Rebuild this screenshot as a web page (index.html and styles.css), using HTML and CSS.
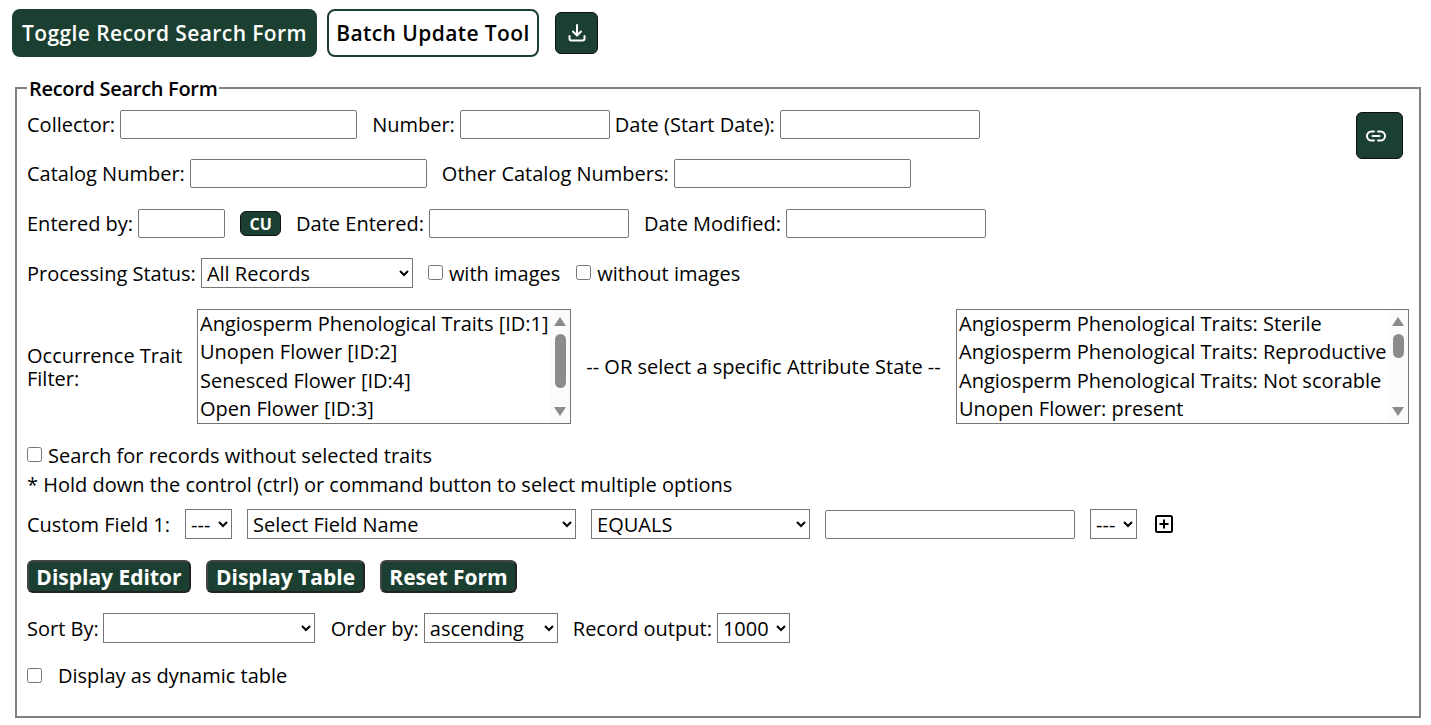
FILE: index.html
```html
<!DOCTYPE html>
<html lang="en">

<head>
    <meta charset="UTF-8">
    <title>Record Search Form</title>
    <link rel="stylesheet" href="styles.css">
</head>

<body>
    <div class="toolbar">
        <button class="btn-big">Toggle Record Search Form</button>
        <button class="btn-big btn-outline">Batch Update Tool</button>
        <button class="btn-icon btn-download" aria-label="Download">
            <svg width="24" height="24" viewBox="0 0 24 24" fill="none" stroke="currentColor" stroke-width="2" stroke-linecap="round" stroke-linejoin="round">
                <path d="M12 4v10M8 10.5l4 4 4-4M4.5 15v2.5a2 2 0 0 0 2 2h11a2 2 0 0 0 2-2V15"/>
            </svg>
        </button>
    </div>

    <fieldset class="search-form">
        <legend>Record Search Form</legend>

        <div class="form-top">
            <div class="top-rows">
                <div class="row row-first">
                    <label for="collector">Collector:</label>
                    <input type="text" id="collector" class="w-237">
                    <label for="number" class="ml-15">Number:</label>
                    <input type="text" id="number" class="w-150">
                    <label for="startDate" class="ml-5">Date (Start Date):</label>
                    <input type="text" id="startDate" class="w-200">
                </div>
                <div class="row row-second">
                    <label for="catalog">Catalog Number:</label>
                    <input type="text" id="catalog" class="w-237">
                    <label for="otherCatalog" class="ml-15">Other Catalog Numbers:</label>
                    <input type="text" id="otherCatalog" class="w-237">
                </div>
            </div>
            <button class="btn-icon btn-link" aria-label="Copy link">
                <svg width="24" height="24" viewBox="0 0 24 24" fill="none" stroke="currentColor" stroke-width="2" stroke-linecap="round">
                    <path d="M10 7.5H7.5a4.5 4.5 0 0 0 0 9H10M14 7.5h2.5a4.5 4.5 0 0 1 0 9H14M8.5 12h7"/>
                </svg>
            </button>
        </div>

        <div class="row row-third">
            <label for="enteredBy">Entered by:</label>
            <input type="text" id="enteredBy" class="w-87">
            <button class="btn-cu ml-15">CU</button>
            <label for="dateEntered">Date Entered:</label>
            <input type="text" id="dateEntered" class="w-200">
            <label for="dateModified" class="ml-15">Date Modified:</label>
            <input type="text" id="dateModified" class="w-200">
        </div>

        <div class="row row-fourth">
            <label for="status">Processing Status:</label>
            <select id="status" class="sel-status">
                <option>All Records</option>
            </select>
            <label class="check ml-15"><input type="checkbox">with images</label>
            <label class="check ml-15"><input type="checkbox">without images</label>
        </div>

        <div class="trait-row">
            <div class="trait-label">Occurrence Trait Filter:</div>
            <div class="listbox list-traits">
                <div class="list-items">
                    <div>Angiosperm Phenological Traits [ID:1]</div>
                    <div>Unopen Flower [ID:2]</div>
                    <div>Senesced Flower [ID:4]</div>
                    <div>Open Flower [ID:3]</div>
                </div>
                <div class="scrollbar">
                    <span class="arrow-up"></span>
                    <span class="thumb thumb-long"></span>
                    <span class="arrow-down"></span>
                </div>
            </div>
            <div class="trait-or">-- OR select a specific Attribute State --</div>
            <div class="listbox list-states">
                <div class="list-items">
                    <div>Angiosperm Phenological Traits: Sterile</div>
                    <div>Angiosperm Phenological Traits: Reproductive</div>
                    <div>Angiosperm Phenological Traits: Not scorable</div>
                    <div>Unopen Flower: present</div>
                </div>
                <div class="scrollbar">
                    <span class="arrow-up"></span>
                    <span class="thumb thumb-short"></span>
                    <span class="arrow-down"></span>
                </div>
            </div>
        </div>

        <div class="row row-without">
            <label class="check"><input type="checkbox">Search for records without selected traits</label>
        </div>
        <div class="note">* Hold down the control (ctrl) or command button to select multiple options</div>

        <div class="row row-custom">
            <label for="paren1">Custom Field 1:</label>
            <select id="paren1" class="sel-small ml-10"><option>---</option></select>
            <select class="sel-field ml-15"><option>Select Field Name</option></select>
            <select class="sel-equals ml-15"><option>EQUALS</option></select>
            <input type="text" class="w-250 ml-15">
            <select class="sel-close ml-15"><option>---</option></select>
            <svg class="add-icon" width="20" height="20" viewBox="0 0 20 20" fill="none" stroke="#000" stroke-width="2">
                <rect x="2" y="2" width="16" height="16" rx="1.5"/>
                <path d="M10 5.5v9M5.5 10h9"/>
            </svg>
        </div>

        <div class="actions">
            <button class="btn-action btn-editor">Display Editor</button>
            <button class="btn-action btn-table">Display Table</button>
            <button class="btn-action btn-reset">Reset Form</button>
        </div>

        <div class="row row-sort">
            <label for="sortBy">Sort By:</label>
            <select id="sortBy" class="sel-sort"><option></option></select>
            <label for="orderBy" class="ml-15">Order by:</label>
            <select id="orderBy" class="sel-order"><option>ascending</option></select>
            <label for="output" class="ml-15">Record output:</label>
            <select id="output" class="sel-output"><option>1000</option></select>
        </div>

        <div class="row row-dynamic">
            <label class="check check-wide"><input type="checkbox">Display as dynamic table</label>
        </div>
    </fieldset>
</body>

</html>
```

FILE: styles.css
```css
body {
    margin: 0;
    padding: 9px 10px 0 15px;
    background-color: white;
    color: #000;
    font-family: "Open Sans", Arial, sans-serif;
    font-size: 20px;
    overflow: hidden;
}

button {
    font-family: inherit;
    cursor: pointer;
}

.toolbar {
    display: flex;
    align-items: center;
    margin-left: -3px;
    height: 48px;
}

.btn-big {
    width: 305px;
    height: 48px;
    padding: 0;
    margin-right: 10px;
    border: 2px solid #1b3f30;
    border-radius: 8px;
    background-color: #1b3f30;
    color: white;
    font-size: 21px;
    font-weight: 600;
    letter-spacing: 0.4px;
    white-space: nowrap;
}

.btn-outline {
    width: 212px;
    margin-right: 16px;
    background-color: white;
    color: #000;
}

.btn-icon {
    display: flex;
    align-items: center;
    justify-content: center;
    padding: 0;
    border: 1px solid #111;
    border-radius: 6px;
    background-color: #1b3f30;
    color: white;
}

.btn-download {
    width: 43px;
    height: 42px;
}

.btn-link {
    width: 47px;
    height: 47px;
    padding-right: 7px;
    margin-top: 2px;
    margin-right: 6px;
    flex-shrink: 0;
}

.search-form {
    margin: 18px 0 0;
    padding: 0 10px;
    height: 643px;
    min-width: 0;
    box-sizing: border-box;
    border: 2px solid #808080;
}

.search-form legend {
    padding: 2px 2px 0;
    font-size: 20px;
    font-weight: 600;
    letter-spacing: -0.3px;
    line-height: 23px;
}

.form-top {
    display: flex;
    justify-content: space-between;
    align-items: flex-start;
    padding-top: 10px;
}

.row {
    display: flex;
    align-items: center;
}

label,
.row input,
.row select {
    flex-shrink: 0;
}

.row > label {
    margin-right: 5px;
}

.row > .check {
    margin-right: 1px;
}

.row input[type="text"],
.row select {
    height: 29px;
    box-sizing: border-box;
    border: 1px solid #767676;
    border-radius: 2px;
    background-color: white;
    font-family: inherit;
    font-size: 20px;
    color: #000;
    padding: 0 1px;
}

.row select {
    height: 30px;
    border-radius: 0;
    padding-left: 1px;
}

.w-87 { width: 87px; }
.w-150 { width: 150px; }
.w-200 { width: 200px; }
.w-237 { width: 237px; }
.w-250 { width: 250px; }

.row > .ml-15 { margin-left: 15px; }
.row > .ml-10 { margin-left: 10px; }
.row > .ml-5 { margin-left: 5px; }

.row-second {
    margin-top: 20px;
}

.row-third {
    margin-top: 21px;
}

.row-fourth {
    margin-top: 20px;
}

.check {
    display: flex;
    align-items: center;
}

.check input {
    width: 15px;
    height: 15px;
    margin: 0 6px 2px 0;
}

.btn-cu {
    width: 41px;
    height: 25px;
    padding: 0;
    margin-right: 15px;
    border: 1px solid #111;
    border-radius: 6px;
    background-color: #1b3f30;
    color: white;
    font-size: 16px;
    font-weight: 700;
}

.sel-status { width: 212px; }
.sel-small { width: 47px; }
.sel-field { width: 329px; }
.sel-equals { width: 219px; }
.sel-close { width: 47px; }
.sel-sort { width: 212px; }
.sel-order { width: 134px; }
.sel-output { width: 73px; }

.trait-row {
    display: flex;
    align-items: center;
    margin-top: 21px;
}

.trait-label {
    width: 170px;
    line-height: 23px;
    margin-top: 1px;
}

.listbox {
    display: flex;
    height: 115px;
    box-sizing: border-box;
    border: 1px solid #767676;
}

.list-traits {
    width: 374px;
}

.list-states {
    width: 453px;
}

.list-items {
    flex: 1;
    padding-left: 2px;
    line-height: 28.3px;
    white-space: nowrap;
    overflow: hidden;
}

.scrollbar {
    display: flex;
    flex-direction: column;
    align-items: center;
    width: 20px;
    padding: 7px 0;
    box-sizing: border-box;
    background-color: #fbfbfb;
}

.arrow-up,
.arrow-down {
    width: 0;
    height: 0;
    border-left: 6px solid transparent;
    border-right: 6px solid transparent;
}

.arrow-up {
    border-bottom: 9px solid #8b8b8b;
}

.arrow-down {
    margin-top: auto;
    border-top: 9px solid #8b8b8b;
}

.thumb {
    width: 11px;
    margin-top: 8px;
    border-radius: 6px;
    background-color: #8b8b8b;
}

.thumb-long { height: 54px; }
.thumb-short { height: 24px; }

.trait-or {
    width: 385px;
    text-align: center;
}

.row-without {
    margin-top: 18px;
}

.note {
    margin-top: 3px;
    line-height: 26px;
}

.row-custom {
    margin-top: 11px;
}

.add-icon {
    margin-left: 17px;
}

.actions {
    display: flex;
    gap: 15px;
    margin-top: 21px;
}

.btn-action {
    height: 33px;
    padding: 0;
    border: 2px solid #222;
    border-top-color: #444;
    border-left-color: #444;
    border-radius: 6px;
    background-color: #1b3f30;
    color: white;
    font-size: 21px;
    font-weight: 700;
    white-space: nowrap;
}

.btn-editor { width: 164px; }
.btn-table { width: 159px; }
.btn-reset { width: 137px; }

.row-sort {
    margin-top: 20px;
}

.row-sort label:first-child {
    margin-right: 4px;
}

.row-sort select:first-of-type + label {
    margin-left: 16px;
}

.row-dynamic {
    margin-top: 19px;
}

.check-wide input {
    margin: 0 16px 0 0;
}
```
